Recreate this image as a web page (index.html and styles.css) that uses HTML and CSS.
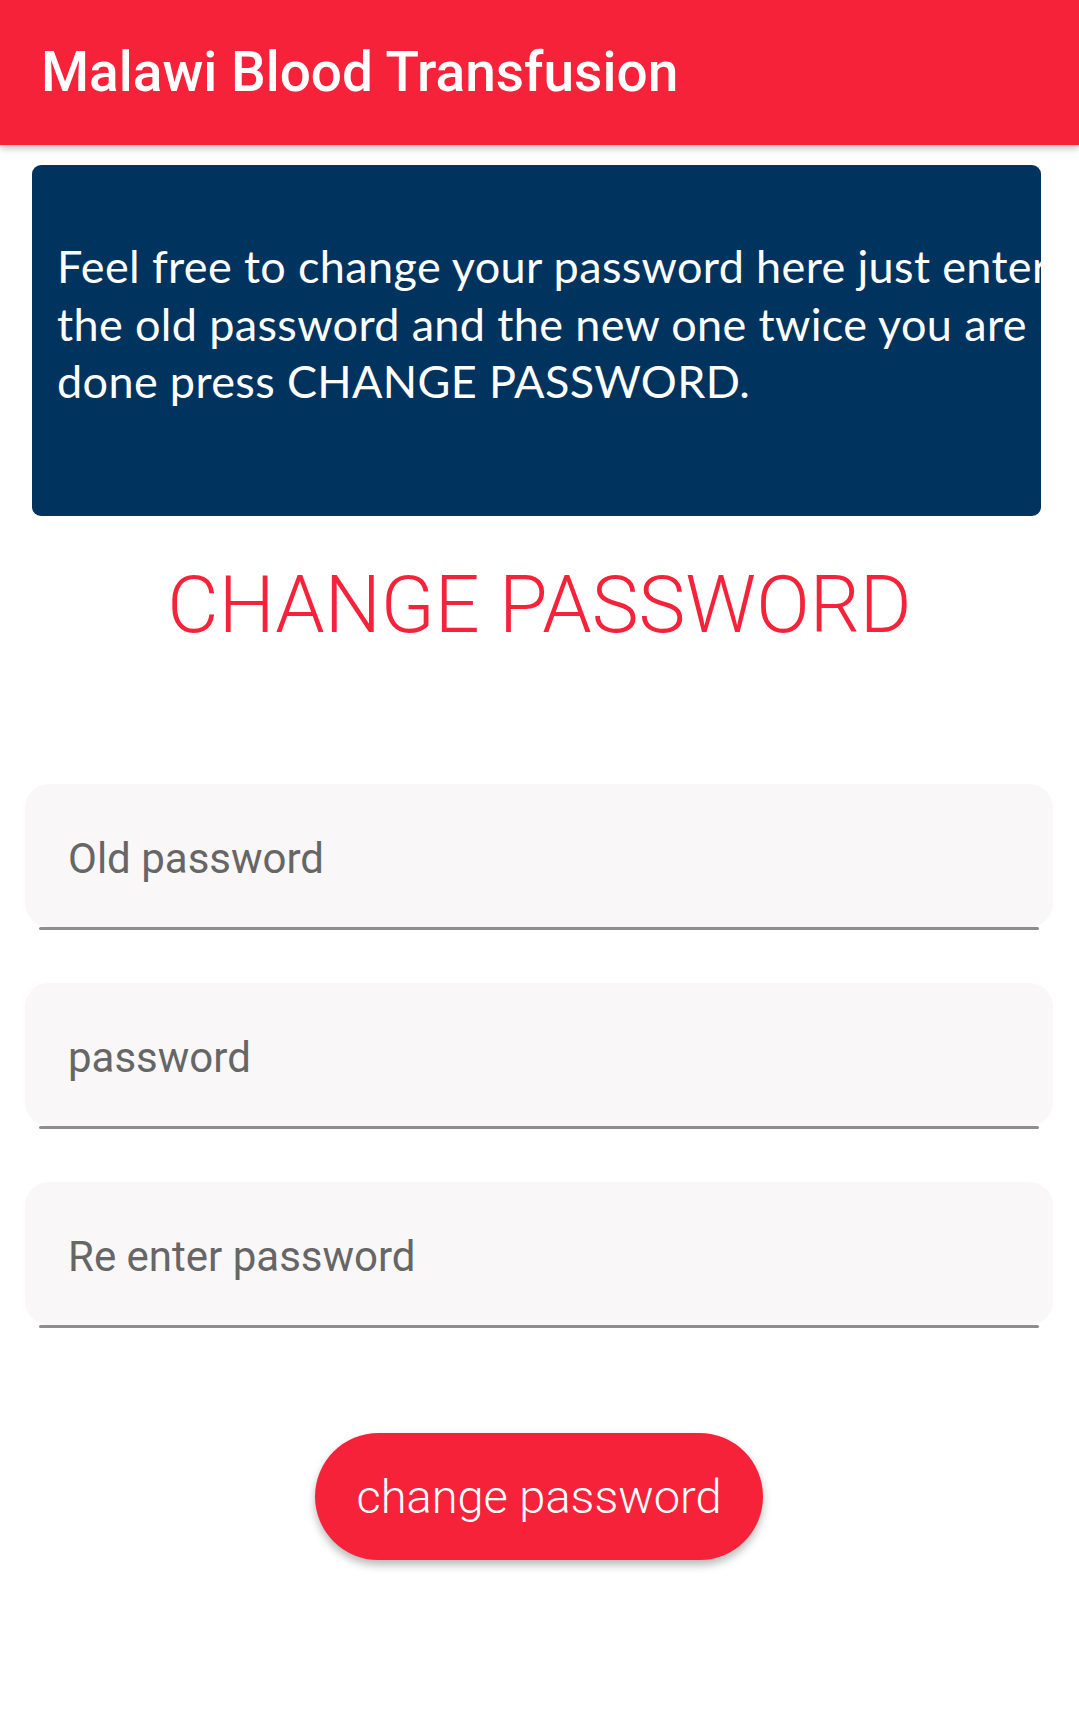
FILE: index.html
```html
<!DOCTYPE html>
<html lang="en">
<head>
<meta charset="utf-8">
<title>Malawi Blood Transfusion</title>
<link rel="stylesheet" href="styles.css">
</head>
<body>
<header class="appbar">
  <h1 class="appbar-title">Malawi Blood Transfusion</h1>
</header>
<main class="content">
  <section class="info-card">
    <p class="info-text"><span class="info-line">Feel free to change your password here just enter</span><span class="info-line">the old password and the new one twice you are</span><span class="info-line">done press CHANGE PASSWORD.</span></p>
  </section>
  <h2 class="page-title">CHANGE PASSWORD</h2>
  <form class="form">
    <div class="field"><span class="field-label">Old password</span></div>
    <div class="field"><span class="field-label">password</span></div>
    <div class="field"><span class="field-label">Re enter password</span></div>
    <div class="actions">
      <button type="button" class="btn">change password</button>
    </div>
  </form>
</main>
</body>
</html>
```
FILE: styles.css
```css
* { box-sizing: border-box; }
html, body { margin: 0; padding: 0; background: #ffffff; }
body { font-family: Roboto, "Noto Sans", sans-serif; width: 1079px; min-height: 1723px; }

.appbar {
  height: 145px;
  background: #f5223a;
  box-shadow: 0 3px 7px rgba(0,0,0,0.28);
  padding-left: 41px;
  position: relative;
  z-index: 2;
}
.appbar-title {
  margin: 0;
  font-family: Roboto, sans-serif;
  font-weight: 500;
  font-size: 55px;
  line-height: 145px;
  color: #ffffff;
}

.content { display: flex; flex-direction: column; }

.info-card {
  margin: 20px 0 0 32px;
  width: 1009px;
  height: 351px;
  background: #01335f;
  border-radius: 9px;
  overflow: hidden;
  padding: 73px 0 0 25px;
}
.info-text {
  margin: 0;
  font-family: Lato, "Open Sans", sans-serif;
  font-size: 45px;
  letter-spacing: 0.35px;
  line-height: 57.5px;
  color: #ffffff;
  white-space: nowrap;
}
.info-line { display: block; }

.page-title {
  margin: 43px 0 0 0;
  text-align: center;
  font-family: Roboto, sans-serif;
  font-weight: 300;
  font-size: 79px;
  line-height: 93px;
  color: #f5223a;
}

.form {
  margin: 132px 0 0 25px;
  display: flex;
  flex-direction: column;
  gap: 53px;
  width: 1028px;
}
.field {
  position: relative;
  height: 146px;
  display: flex;
  align-items: center;
}
.field::before {
  content: "";
  position: absolute;
  left: 0; right: 0; top: 0; height: 143px;
  background: #f9f7f8;
  border-radius: 24px;
}
.field::after {
  content: "";
  position: absolute;
  left: 14px; right: 14px; bottom: 0; height: 3.5px;
  background: #8e8e8e;
  border-radius: 2px;
}
.field-label {
  position: relative;
  padding: 2px 0 0 43px;
  font-family: Roboto, sans-serif;
  font-weight: 400;
  font-size: 42px;
  color: #666666;
}

.actions {
  display: flex;
  justify-content: center;
  margin-top: 52px;
}
.btn {
  width: 448px;
  height: 127px;
  border: none;
  border-radius: 64px;
  background: #f5223a;
  color: #ffffff;
  font-family: Roboto, sans-serif;
  font-weight: 300;
  font-size: 47px;
  padding: 0;
  box-shadow: 0 5px 8px rgba(0,0,0,0.28);
}
```
